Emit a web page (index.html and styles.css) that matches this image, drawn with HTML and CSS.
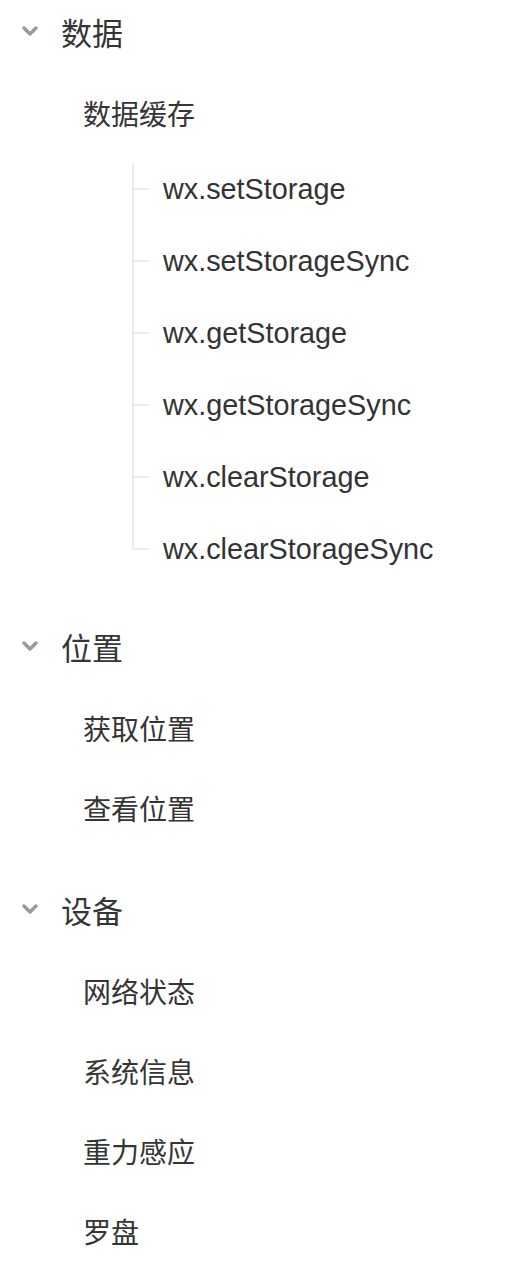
FILE: index.html
```html
<!DOCTYPE html>
<html lang="zh-CN">
<head>
    <meta charset="UTF-8">
    <meta name="viewport" content="width=device-width, initial-scale=1.0">
    <title>API 目录</title>
    <link rel="stylesheet" href="styles.css">
</head>
<body>
    <div class="menu">
        <section class="group">
            <div class="group-title">
                <svg class="chevron" viewBox="0 0 16 10" width="16" height="10"><path d="M2 2 L8 8 L14 2"/></svg>
                <span>数据</span>
            </div>
            <ul class="group-items">
                <li class="item">数据缓存</li>
                <li>
                    <ul class="tree">
                        <li class="tree-item"><span class="tick"></span>wx.setStorage</li>
                        <li class="tree-item"><span class="tick"></span>wx.setStorageSync</li>
                        <li class="tree-item"><span class="tick"></span>wx.getStorage</li>
                        <li class="tree-item"><span class="tick"></span>wx.getStorageSync</li>
                        <li class="tree-item"><span class="tick"></span>wx.clearStorage</li>
                        <li class="tree-item"><span class="tick"></span>wx.clearStorageSync</li>
                    </ul>
                </li>
            </ul>
        </section>

        <section class="group">
            <div class="group-title">
                <svg class="chevron" viewBox="0 0 16 10" width="16" height="10"><path d="M2 2 L8 8 L14 2"/></svg>
                <span>位置</span>
            </div>
            <ul class="group-items">
                <li class="item">获取位置</li>
                <li class="item">查看位置</li>
            </ul>
        </section>

        <section class="group">
            <div class="group-title">
                <svg class="chevron" viewBox="0 0 16 10" width="16" height="10"><path d="M2 2 L8 8 L14 2"/></svg>
                <span>设备</span>
            </div>
            <ul class="group-items">
                <li class="item">网络状态</li>
                <li class="item">系统信息</li>
                <li class="item">重力感应</li>
                <li class="item">罗盘</li>
            </ul>
        </section>
    </div>
</body>
</html>
```

FILE: styles.css
```css
body {
    margin: 0;
    background: #fff;
    color: #353535;
    font-family: "Noto Sans CJK SC", "Liberation Sans", sans-serif;
}

ul {
    list-style: none;
    margin: 0;
    padding: 0;
}

.group {
    padding-bottom: 30px;
}

.group-title {
    display: flex;
    align-items: center;
    gap: 23px;
    height: 62px;
    padding-left: 22px;
    font-size: 31px;
}

.chevron {
    flex: none;
    fill: none;
    stroke: #999;
    stroke-width: 3.4;
    stroke-linecap: round;
    stroke-linejoin: round;
}

.group-items {
    margin-top: 11px;
}

.item {
    display: flex;
    align-items: center;
    height: 80px;
    padding-left: 83px;
    font-size: 28px;
}

.tree {
    margin-left: 132px;
}

.tree-item {
    position: relative;
    display: flex;
    align-items: center;
    height: 72px;
    font-family: "Liberation Sans", Arial, sans-serif;
    font-size: 28.8px;
    color: #333;
}

.tree-item::before {
    content: "";
    position: absolute;
    left: 0;
    top: 0;
    bottom: 0;
    width: 2px;
    background: #ececec;
}

.tree-item:first-child::before {
    top: 10px;
}

.tree-item:last-child::before {
    bottom: 50%;
}

.tick {
    flex: none;
    width: 17px;
    height: 2px;
    margin-right: 14px;
    background: #ececec;
}
```
